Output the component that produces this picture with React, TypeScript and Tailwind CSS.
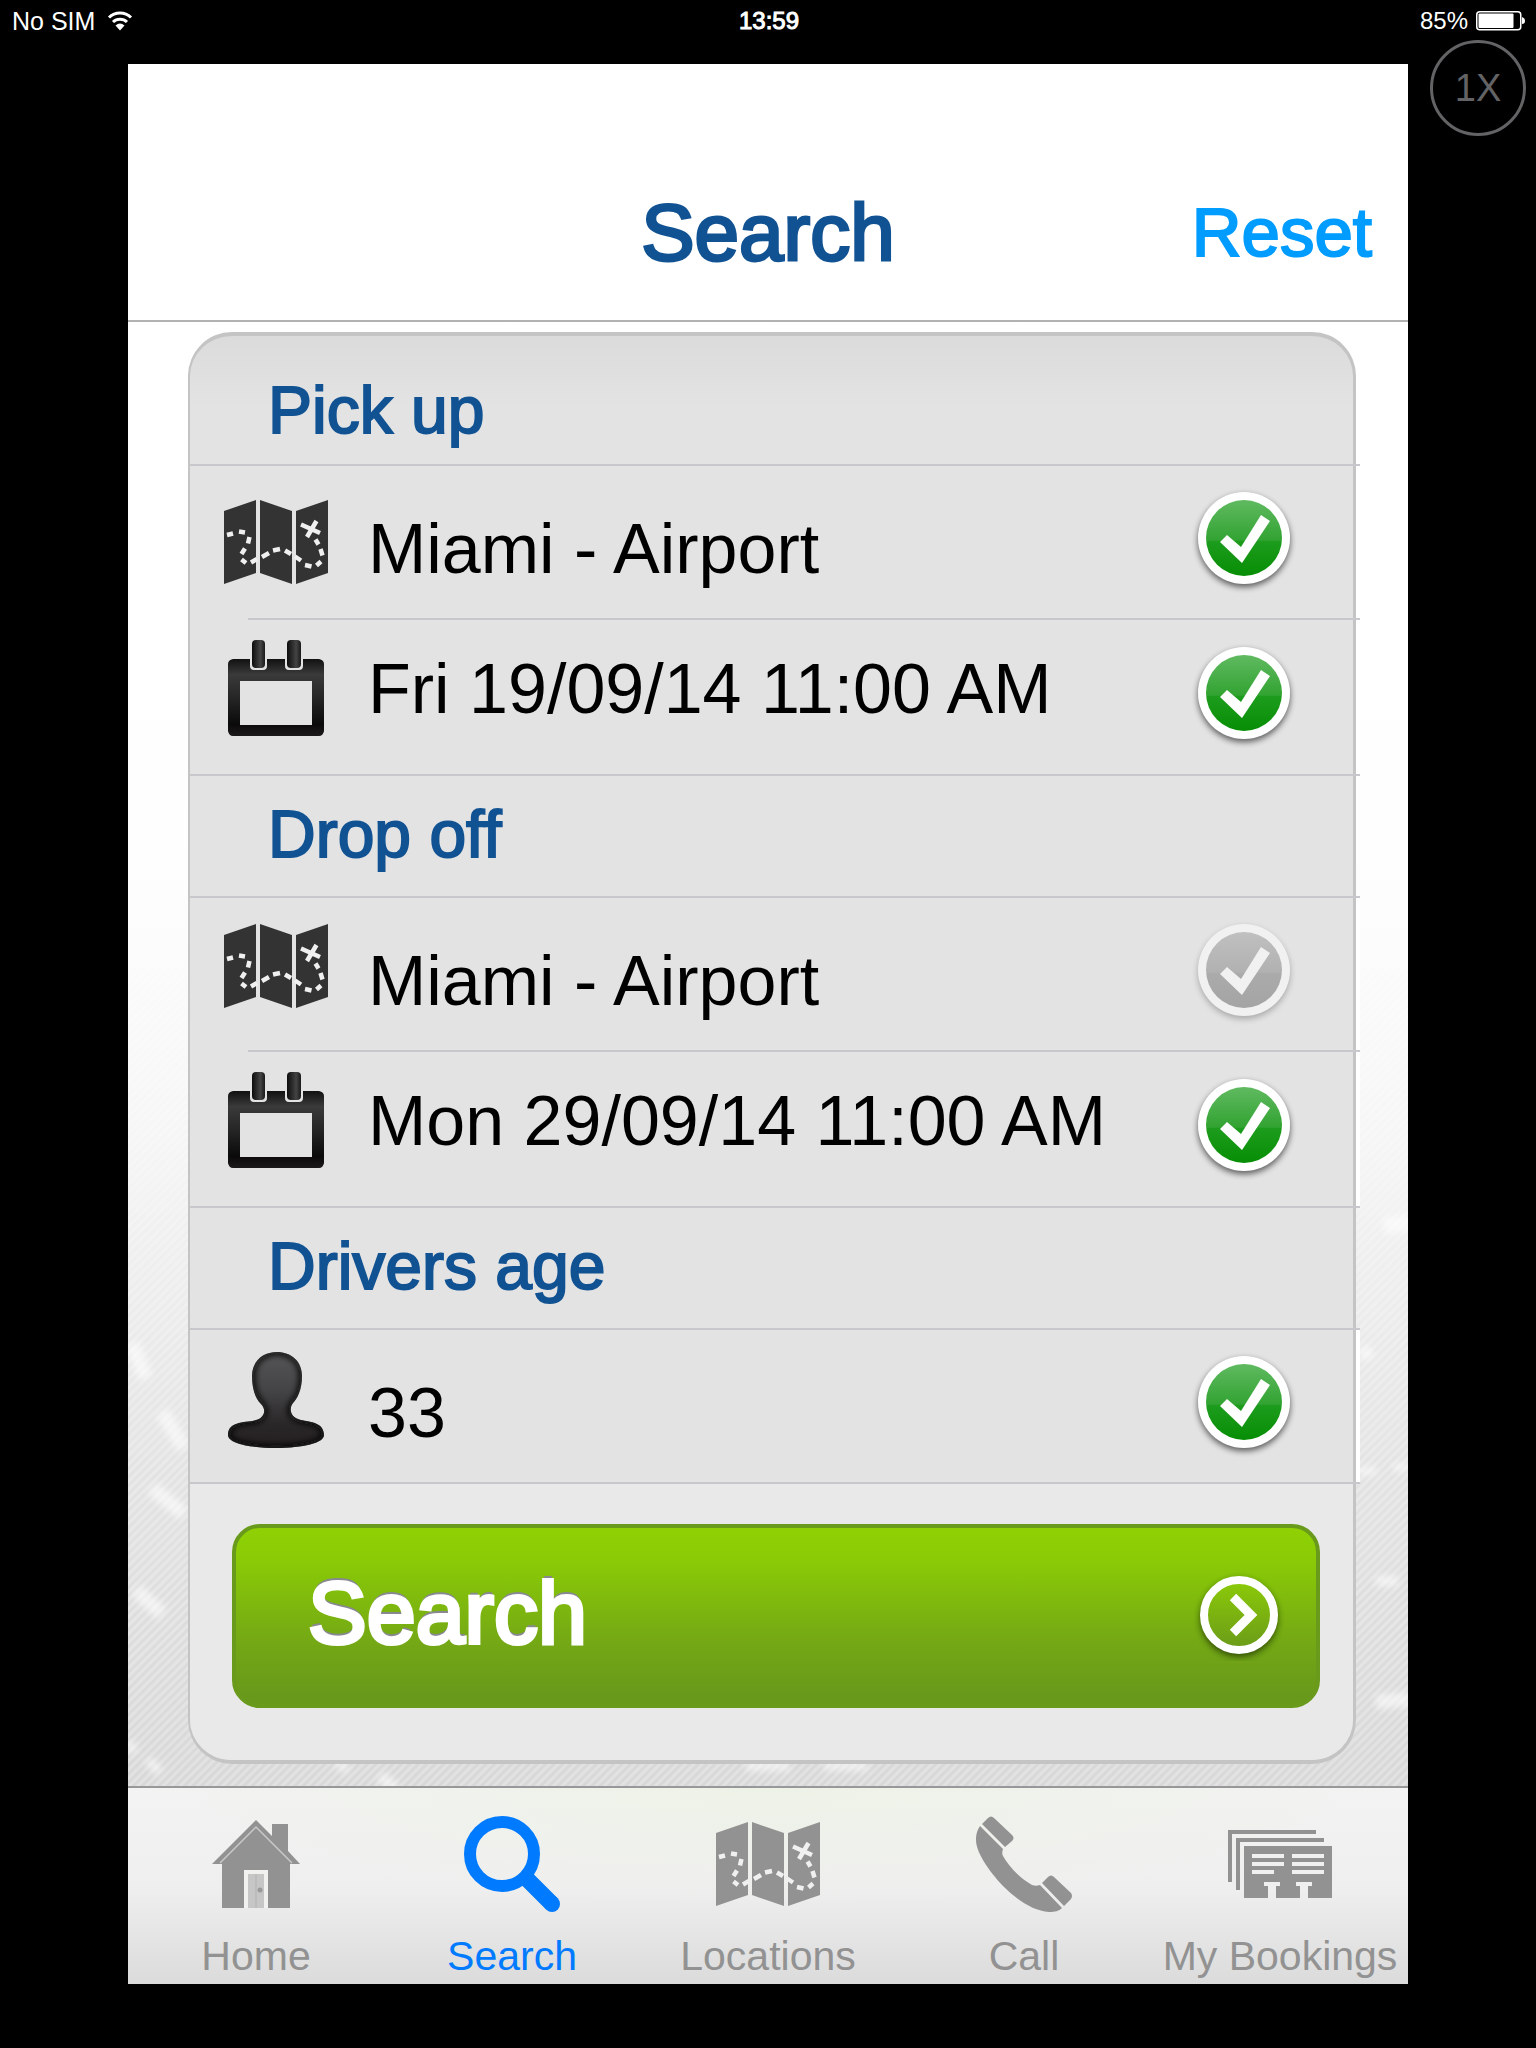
import React from "react";

type IconProps = { className?: string };

const MAP_ROUTE =
  "M3 35L9 33.500M15 31.500L21 32.500M25.500 37L24 43.500M21 48.500L17.500 54M17.500 59.500L22 63M27 62.500L33 59M38 57L45 53M49 50.500L56 49M61 50.500L67 54M71 56.500L77 60.500M81 65L87.500 66.500M92.500 65.500L97 61.500M98.500 55.500L96.500 49M94.500 44.500L91.500 39.500M77 24.500L96 33M92.500 21L83 37";

function MapIcon({ className }: IconProps) {
  return (
    <svg className={className} width="104" height="84" viewBox="0 0 104 84" aria-hidden="true">
      <path fill="currentColor" d="M0 11L32 0V73L0 84ZM36 0L68 11V84L36 73ZM72 11L104 0V73L72 84Z" />
      <path d={MAP_ROUTE} fill="none" stroke="#f0f0f0" strokeWidth="4.500" />
    </svg>
  );
}

function CalendarIcon() {
  return (
    <svg width="96" height="96" viewBox="0 0 96 96" aria-hidden="true">
      <defs>
        <linearGradient id="cal-body" x1="0" y1="0" x2="0" y2="1">
          <stop offset="0" stopColor="#111" />
          <stop offset="0.2" stopColor="#3a3a3b" />
          <stop offset="0.5" stopColor="#262626" />
          <stop offset="0.85" stopColor="#0b0a0a" />
          <stop offset="1" stopColor="#1d1a1b" />
        </linearGradient>
        <linearGradient id="cal-ring" x1="0" y1="0" x2="1" y2="0">
          <stop offset="0" stopColor="#0c0c0c" />
          <stop offset="0.65" stopColor="#444" />
          <stop offset="1" stopColor="#1a1a1a" />
        </linearGradient>
      </defs>
      <path
        fill="url(#cal-body)"
        fillRule="evenodd"
        d="M5 19H91Q96 20 96 24V91Q95 96 91 96H5Q1 96 0 91V24Q0 20 5 19ZM12 41V85H84V41Z"
      />
      <path fill="#e3e3e3" d="M22 17H39V26Q39 30 35 30H26Q22 30 22 26ZM57 17H75V26Q75 30 71 30H61Q57 30 57 26Z" />
      <rect x="24" y="0" width="13" height="28" rx="4" fill="url(#cal-ring)" />
      <rect x="59" y="0" width="14" height="28" rx="4" fill="url(#cal-ring)" />
    </svg>
  );
}

const PERSON =
  "M49 0C63 0 74 9 74 24C74 38 69 47 65 51C61 56 62 64 70 67C76 70 96 68 96 83C96 91 75 96 48 96C21 96 0 91 0 83C0 68 20 71 28 68C36 66 39 58 33 52C27 46 24 36 24 24C24 9 35 0 49 0Z";

function PersonIcon() {
  return (
    <svg width="96" height="96" viewBox="0 0 96 96" aria-hidden="true">
      <defs>
        <linearGradient id="person-fill" x1="0" y1="0" x2="0" y2="1">
          <stop offset="0" stopColor="#555557" />
          <stop offset="0.4" stopColor="#444446" />
          <stop offset="0.75" stopColor="#2a2728" />
          <stop offset="1" stopColor="#231f20" />
        </linearGradient>
        <filter id="person-soft">
          <feGaussianBlur stdDeviation="3" />
        </filter>
        <clipPath id="person-clip">
          <path d={PERSON} />
        </clipPath>
      </defs>
      <path d={PERSON} fill="url(#person-fill)" />
      <g clipPath="url(#person-clip)">
        <path d={PERSON} fill="none" stroke="#080808" strokeWidth="6" filter="url(#person-soft)" />
      </g>
    </svg>
  );
}

function CheckIcon({ done }: { done: boolean }) {
  return (
    <svg
      width="112"
      height="112"
      viewBox="0 0 112 112"
      role="img"
      aria-label={done ? "Completed" : "Same as pick up"}
    >
      <defs>
        <linearGradient id="check-on" x1="0" y1="0" x2="0" y2="1">
          <stop offset="0" stopColor="#60ba60" />
          <stop offset="0.53" stopColor="#32a332" />
          <stop offset="0.54" stopColor="#1d9c1d" />
          <stop offset="1" stopColor="#078e05" />
        </linearGradient>
        <linearGradient id="check-off" x1="0" y1="0" x2="0" y2="1">
          <stop offset="0" stopColor="#c0c0c0" />
          <stop offset="0.53" stopColor="#b1b1b1" />
          <stop offset="0.54" stopColor="#ababab" />
          <stop offset="1" stopColor="#a4a4a4" />
        </linearGradient>
        <filter id="check-soft" x="-20%" y="-20%" width="140%" height="140%">
          <feGaussianBlur stdDeviation="3" />
        </filter>
      </defs>
      <circle cx="56" cy="55" r="46" fill="#000" opacity={done ? 0.6 : 0.25} filter="url(#check-soft)" />
      <circle cx="56" cy="52" r="46" fill={done ? "#fff" : "#f1f1f1"} />
      <circle cx="56" cy="52" r="38" fill={done ? "url(#check-on)" : "url(#check-off)"} />
      <path d="M32 56L39 49L53 61L73 29L82 35L54 77Z" fill={done ? "#fff" : "#f1f1f1"} />
    </svg>
  );
}

function ArrowIcon() {
  return (
    <svg width="96" height="96" viewBox="0 0 96 96" aria-hidden="true">
      <defs>
        <linearGradient id="arrow-fill" x1="0" y1="0" x2="0" y2="1">
          <stop offset="0" stopColor="#8ccb08" />
          <stop offset="1" stopColor="#6a9a19" />
        </linearGradient>
        <filter id="arrow-soft" x="-20%" y="-20%" width="140%" height="140%">
          <feGaussianBlur stdDeviation="3" />
        </filter>
      </defs>
      <circle cx="47" cy="53" r="39" fill="#1c3000" opacity="0.75" filter="url(#arrow-soft)" />
      <circle cx="47" cy="50" r="35" fill="url(#arrow-fill)" stroke="#fff" strokeWidth="8" />
      <path d="M41 32L59 50L41 68" fill="none" stroke="#fff" strokeWidth="9" />
    </svg>
  );
}

function HomeIcon() {
  return (
    <svg width="88" height="88" viewBox="0 0 88 88" aria-hidden="true">
      <path fill="currentColor" d="M0 44L44 0L60 16V4H76V31L88 44H78V88H10V44Z" />
      <path d="M8 43L44 7L80 43" fill="none" stroke="#c8c8c8" strokeWidth="1.500" />
      <path d="M32 50H56V88H32Z" fill="#f1f1f0" />
      <path d="M36 54H52V88H36Z" fill="#c6c6c6" />
      <path d="M44 54V88" stroke="#bcbcbc" strokeWidth="2" />
      <circle cx="48" cy="70" r="2.500" fill="#999" />
    </svg>
  );
}

function SearchIcon() {
  return (
    <svg width="96" height="96" viewBox="0 0 96 96" aria-hidden="true">
      <circle cx="38" cy="38" r="32" fill="none" stroke="currentColor" strokeWidth="12" />
      <path d="M63 63L88 88" stroke="currentColor" strokeWidth="16" />
      <circle cx="88" cy="88" r="8" fill="currentColor" />
    </svg>
  );
}

function PhoneIcon() {
  return (
    <svg width="96" height="96" viewBox="0 0 96 96" aria-hidden="true">
      <path
        fill="currentColor"
        d="M4 10L27 33C26 36 26 38 27 40C33 51 44 62 56 69C59 70 61 70 64 69L86 92C83 95 79 96 73 96C58 95 42 85 27 70C12 54 0 36 0 24C0 17 2 13 4 10Z"
      />
      <path fill="currentColor" d="M6 8L12 2Q15 -1 18 2L36 19Q39 22 36 25L29 31Z" />
      <path fill="currentColor" d="M66 67L72 61Q75 58 78 61L95 77Q97 80 95 83L88 90Z" />
    </svg>
  );
}

function BookingsIcon() {
  return (
    <svg width="104" height="68" viewBox="0 0 104 68" aria-hidden="true">
      <path fill="currentColor" d="M0 0H88V4H4V52H0ZM8 8H96V12H12V60H8Z" />
      <path
        fill="currentColor"
        fillRule="evenodd"
        d="M16 16H104V68H80V56H84V52H68V56H72V68H48V56H52V52H36V56H40V68H16ZM24 24V28H56V24ZM64 24V28H96V24ZM24 32V36H56V32ZM64 32V36H96V32ZM24 40V44H46V40ZM64 40V44H96V40Z"
      />
    </svg>
  );
}

function WifiIcon() {
  return (
    <svg width="26" height="20" viewBox="0 0 26 20" aria-label="Wi-Fi" role="img">
      <path d="M2 6.500A15.500 15.500 0 0 1 24 6.500M6 11A10 10 0 0 1 20 11" fill="none" stroke="#fff" strokeWidth="3" />
      <path d="M8.500 14.500Q13 10.500 17.500 14.500L13 19.500Z" fill="#fff" />
    </svg>
  );
}

function BatteryIcon() {
  return (
    <svg width="50" height="20" viewBox="0 0 50 20" aria-label="Battery" role="img">
      <rect x="0.750" y="0.750" width="44" height="18" rx="3" fill="none" stroke="#fff" strokeWidth="1.500" />
      <rect x="2.500" y="2.500" width="35" height="14.500" rx="1" fill="#fff" />
      <path d="M46 6Q49 7 49 10T46 13Z" fill="#fff" />
    </svg>
  );
}

/* Soft dashes scattered over the striped backdrop: x1, y1, x2, y2, thickness */
const DASHES: number[][] = [
  [4, 1022, 18, 1056, 14],
  [34, 1090, 56, 1126, 14],
  [24, 1166, 56, 1192, 14],
  [8, 1268, 34, 1292, 14],
  [0, 1420, 6, 1430, 10],
  [20, 1438, 32, 1450, 9],
  [208, 1440, 220, 1448, 9],
  [252, 1454, 268, 1468, 12],
  [618, 1444, 662, 1444, 10],
  [696, 1444, 740, 1444, 9],
  [1248, 1259, 1270, 1259, 10],
  [1248, 1380, 1282, 1377, 14],
  [1230, 1150, 1248, 1148, 8],
  [1266, 1146, 1282, 1144, 8],
  [1256, 904, 1282, 900, 16],
  [1232, 1032, 1244, 1030, 12],
];

function Backdrop() {
  return (
    <div className="absolute inset-0 -z-10 overflow-hidden bg-[linear-gradient(to_bottom,#fff_0%,#fefefe_36%,#f8f8f8_55%,#e8e8e8_78%,#dedede_100%)]">
      <div className="absolute inset-0 bg-[repeating-linear-gradient(135deg,rgba(0,0,0,0.025)_0px,rgba(0,0,0,0.025)_2px,rgba(255,255,255,0.12)_3px,rgba(255,255,255,0.12)_5px,rgba(0,0,0,0.025)_6px)] [mask-image:linear-gradient(to_bottom,transparent_40%,#000_90%)]" />
      <svg className="absolute inset-0 h-full w-full" viewBox="0 0 1280 1464" preserveAspectRatio="none" aria-hidden="true">
        <defs>
          <filter id="dash-soft" x="0" y="0" width="1280" height="1464" filterUnits="userSpaceOnUse">
            <feGaussianBlur stdDeviation="3" />
          </filter>
        </defs>
        <g stroke="#fff" strokeOpacity="0.55" filter="url(#dash-soft)">
          {DASHES.map(([x1, y1, x2, y2, w]) => (
            <line key={`${x1}-${y1}`} x1={x1} y1={y1} x2={x2} y2={y2} strokeWidth={w} />
          ))}
        </g>
      </svg>
    </div>
  );
}

function Divider({ inset = false }: { inset?: boolean }) {
  return (
    <hr className={`relative -mr-[7px] h-[2px] border-0 bg-[#c7c7cc] ${inset ? "ml-[58px]" : ""}`} />
  );
}

function SectionTitle({ children, first = false }: { children: string; first?: boolean }) {
  return (
    <h2
      className={`pl-[78px] text-[66px] leading-[72px] text-[#115293] [-webkit-text-stroke:2px_#115293] ${
        first ? "pt-[38px] pb-[18px]" : "pt-[22px] pb-[26px]"
      }`}
    >
      {children}
    </h2>
  );
}

type RowProps = {
  icon: React.ReactNode;
  label: string;
  done?: boolean;
  iconPad: string;
  textPad: string;
  height?: string;
};

function Row({ icon, label, done = true, iconPad, textPad, height = "h-[152px]" }: RowProps) {
  return (
    <button
      type="button"
      className={`-mr-[7px] flex w-[calc(100%+7px)] items-start border-r-4 border-white pr-14 pl-[34px] text-left ${height}`}
    >
      <span className={`flex w-26 shrink-0 justify-center ${iconPad}`}>{icon}</span>
      <span className={`ml-10 flex-1 text-[70px] leading-[80px] whitespace-nowrap text-black ${textPad}`}>
        {label}
      </span>
      <span className="flex h-full shrink-0 items-center">
        <CheckIcon done={done} />
      </span>
    </button>
  );
}

const TABS = [
  { label: "Home", icon: <HomeIcon />, active: false },
  { label: "Search", icon: <SearchIcon />, active: true },
  { label: "Locations", icon: <MapIcon />, active: false },
  { label: "Call", icon: <PhoneIcon />, active: false },
  { label: "My Bookings", icon: <BookingsIcon />, active: false },
];

export default function App() {
  return (
    <div className="flex min-h-screen flex-col bg-black font-['Liberation_Sans',Arial,sans-serif]">
      <div className="grid h-10 grid-cols-[1fr_auto_1fr] items-center pt-[2px] pr-[10px] pl-3 text-[24px] leading-[28px] text-white">
        <div className="flex items-center gap-3">
          <span className="text-[25px]">No SIM</span>
          <WifiIcon />
        </div>
        <time className="[-webkit-text-stroke:1px_#fff]">13:59</time>
        <div className="flex items-center justify-end gap-2">
          <span>85%</span>
          <BatteryIcon />
        </div>
      </div>

      <div className="flex flex-1">
        <div className="w-32 shrink-0" />
        <div className="mt-6 mb-16 flex min-w-0 flex-1 flex-col bg-white">
          <header className="grid grid-cols-[1fr_auto_1fr] items-center border-b-2 border-[#b2b2b2] px-9 pt-[121px] pb-[39px]">
            <h1 className="col-start-2 text-[80px] leading-[96px] text-[#115293] [-webkit-text-stroke:3px_#115293]">
              Search
            </h1>
            <button
              type="button"
              className="justify-self-end text-[69px] leading-[80px] text-[#009cff] [-webkit-text-stroke:2px_#009cff]"
            >
              Reset
            </button>
          </header>

          <main className="relative isolate flex-1 pt-[10px] pr-[52px] pb-[22px] pl-[60px]">
            <Backdrop />
            <form
              onSubmit={(event) => event.preventDefault()}
              className="rounded-[44px] border-t-4 border-r-[3px] border-b-4 border-l-2 border-[#c4c4c4] bg-[linear-gradient(to_bottom,#dbdbdb_0px,#e3e3e3_70px)]"
            >
              <SectionTitle first>Pick up</SectionTitle>
              <Divider />
              <Row
                icon={<MapIcon className="text-[#333]" />}
                label="Miami - Airport"
                iconPad="pt-[34px]"
                textPad="pt-[43px]"
              />
              <Divider inset />
              <Row
                icon={<CalendarIcon />}
                label="Fri 19/09/14 11:00 AM"
                iconPad="pt-5"
                textPad="pt-[29px]"
                height="h-[154px]"
              />
              <Divider />
              <SectionTitle>Drop off</SectionTitle>
              <Divider />
              <Row
                icon={<MapIcon className="text-[#333]" />}
                label="Miami - Airport"
                done={false}
                iconPad="pt-[26px]"
                textPad="pt-[43px]"
              />
              <Divider inset />
              <Row
                icon={<CalendarIcon />}
                label="Mon 29/09/14 11:00 AM"
                iconPad="pt-5"
                textPad="pt-[29px]"
                height="h-[154px]"
              />
              <Divider />
              <SectionTitle>Drivers age</SectionTitle>
              <Divider />
              <Row icon={<PersonIcon />} label="33" iconPad="pt-[22px]" textPad="pt-[43px]" />
              <Divider />
              <div className="rounded-b-[41px] bg-[#e9e9e9] pt-10 pr-[33px] pb-[52px] pl-[42px]">
                <button
                  type="submit"
                  className="flex h-[184px] w-full items-center justify-between rounded-[28px] border-4 border-[#6a9a1b] bg-[linear-gradient(to_bottom,#8fd104_0%,#8acb06_18%,#74a815_65%,#69991b_95%)] pr-7 pb-[6px] pl-[72px]"
                >
                  <span className="text-[88px] leading-[96px] text-white [-webkit-text-stroke:4px_#fff] [text-shadow:0_-4px_0_#888890]">
                    Search
                  </span>
                  <ArrowIcon />
                </button>
              </div>
            </form>
          </main>

          <nav className="grid grid-cols-5 border-t-2 border-[#98989a] bg-[radial-gradient(ellipse_50%_60%_at_50%_0%,rgba(236,242,228,0.8),rgba(236,242,228,0)),linear-gradient(to_bottom,#f3f3f3_0%,#efefef_50%,#dbdbdb_100%)] pt-7 pb-1">
            {TABS.map(({ label, icon, active }) => (
              <a
                key={label}
                href={`#${label.toLowerCase().replace(" ", "-")}`}
                aria-current={active ? "page" : undefined}
                className={`flex flex-col items-center gap-5 ${active ? "text-[#007aff]" : "text-[#929292]"}`}
              >
                <span className="flex h-24 items-center">{icon}</span>
                <span className="text-[41px] leading-[48px] whitespace-nowrap">{label}</span>
              </a>
            ))}
          </nav>
        </div>
        <div className="flex w-32 shrink-0 items-start justify-end pr-[10px]">
          <button
            type="button"
            className="flex h-24 w-24 items-center justify-center rounded-full border-[3px] border-[#636366] text-[38px] leading-[48px] text-[#636366]"
          >
            1X
          </button>
        </div>
      </div>
    </div>
  );
}
